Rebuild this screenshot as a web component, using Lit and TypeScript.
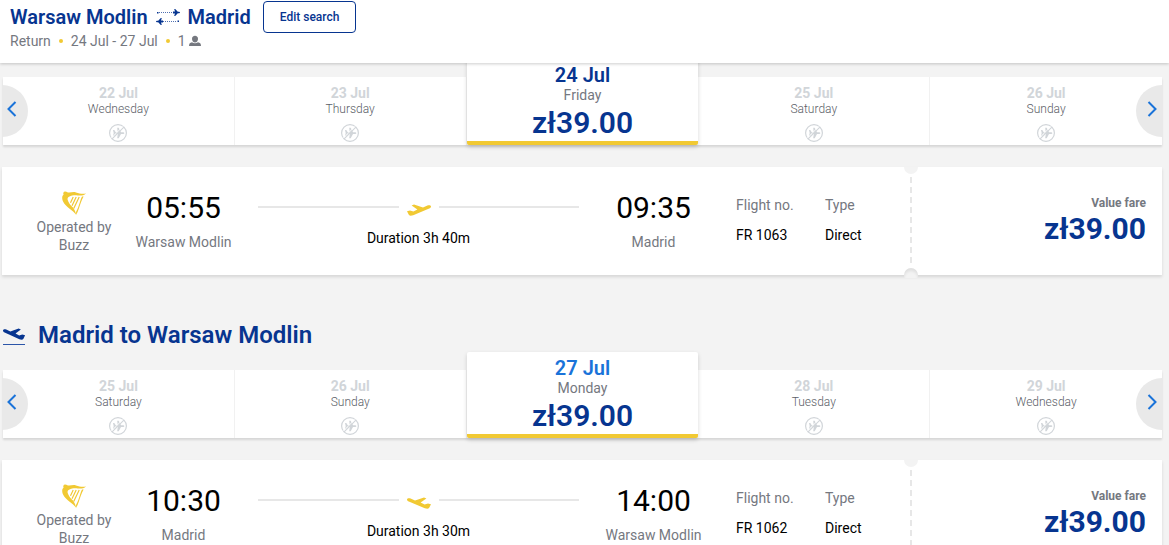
import { LitElement, html, css, svg } from "lit";
import { customElement, property } from "lit/decorators.js";
import { classMap } from "lit/directives/class-map.js";

interface Day {
  date: string;
  weekday: string;
  price?: string;
}

interface Flight {
  departs: string;
  from: string;
  arrives: string;
  to: string;
  duration: string;
  number: string;
  inbound: boolean;
}

const PLANE = "M0 7.2 3 6.4 6.4 7.4 10.4 5.4 4.6 1.4 7 .4 16 3.4 20.4 1.6C22.6 .9 24.2 1.6 24 2.8c-.1.9-.8 1.4-1.8 1.8L6.2 11.2C4 12 2.6 11.8 1.8 10.8Z";

const planeShape = (inbound: boolean) =>
  svg`<path fill="currentColor" transform=${inbound ? "translate(24 0) scale(-1 1)" : "translate(0 0)"} d=${PLANE} />`;

@customElement("date-carousel")
class DateCarousel extends LitElement {
  @property({ attribute: false }) days: Day[] = [];
  @property({ type: Boolean }) active = false;

  static styles = css`
    :host { display: block; position: relative; }
    button { font: inherit; color: inherit; border: 0; margin: 0; padding: 0; background: none; cursor: pointer; }
    .days {
      display: grid;
      grid-template-columns: repeat(5, 1fr);
      grid-template-rows: 68px;
      align-items: end;
      margin-left: 1px;
      background: #fff;
      box-shadow: 0 2px 2px rgba(0, 0, 0, 0.12);
    }
    .day {
      box-sizing: border-box;
      display: flex;
      flex-direction: column;
      align-items: center;
      height: 68px;
      padding-top: 8px;
      border-right: 1px solid #f1f1f1;
    }
    .day:last-child { border-right: 0; }
    .date { font-size: 14px; line-height: 16px; font-weight: 700; color: #d1d5d9; }
    .weekday { font-size: 12px; line-height: 16px; font-weight: 300; color: #5b6067; }
    .none { width: 20px; height: 20px; margin-top: 6px; color: #d1d5d9; }
    .selected {
      height: 86px;
      padding-top: 4px;
      background: #fff;
      border-right: 0;
      border-bottom: 4px solid #f1c933;
      border-radius: 2px;
      box-shadow: 0 2px 4px rgba(0, 0, 0, 0.16);
    }
    .selected .date { font-size: 20px; line-height: 24px; font-weight: 600; color: #073590; }
    .selected.active .date { color: #1a73d9; }
    .selected .weekday { font-size: 14px; line-height: 16px; font-weight: 400; color: #75787f; }
    .price { font-size: 30px; line-height: 40px; font-weight: 600; color: #073590; }
    .nav {
      position: absolute;
      top: 8px;
      width: 26px;
      height: 52px;
      display: flex;
      align-items: center;
      background: #e9e9e9;
      color: #1a73d9;
    }
    .nav svg { width: 10px; height: 16px; margin: 0 5px 4px; }
    .prev { left: 0; border-radius: 0 26px 26px 0; }
    .next { right: 0; border-radius: 26px 0 0 26px; justify-content: flex-end; }
  `;

  render() {
    return html`
      <div class="days">
        ${this.days.map((d) => html`
          <button class=${classMap({ day: true, selected: !!d.price, active: this.active })}>
            <span class="date">${d.date}</span>
            <span class="weekday">${d.weekday}</span>
            ${d.price
              ? html`<span class="price">${d.price}</span>`
              : html`<svg class="none" viewBox="0 0 20 20" aria-hidden="true">
                  <circle cx="10" cy="10" r="8.4" fill="none" stroke="currentColor" stroke-width="1.2" />
                  <path fill="currentColor" d="M5 7h1.3l1.4 2.2h2L9.2 4.8h1.5l2.3 4.4h2.1c1.7 0 1.7 1.8 0 1.8H13l-2.3 4.3H9.2l.6-4.3h-2l-1.5 2.1H5l.7-3Z" />
                  <path d="M3.3 15.1 15.1 3.3" stroke="#fff" stroke-width="1" />
                  <path d="M4.1 15.9 15.9 4.1" stroke="currentColor" stroke-width="1.1" />
                </svg>`}
          </button>`)}
      </div>
      <button class="nav prev" aria-label="Previous dates">
        <svg viewBox="0 0 10 16"><path d="M8.5 1 1.5 8l7 7" fill="none" stroke="currentColor" stroke-width="2" /></svg>
      </button>
      <button class="nav next" aria-label="Next dates">
        <svg viewBox="0 0 10 16"><path d="M1.5 1l7 7-7 7" fill="none" stroke="currentColor" stroke-width="2" /></svg>
      </button>
    `;
  }
}

@customElement("flight-card")
class FlightCard extends LitElement {
  @property({ attribute: false }) flight!: Flight;

  static styles = css`
    :host { display: block; }
    .card {
      display: flex;
      height: 108px;
      background: #fff;
      box-shadow: 0 2px 3px rgba(0, 0, 0, 0.12);
      font-size: 14px;
      line-height: 18px;
      color: #75787f;
    }
    .trip { flex: 1; display: flex; padding: 24px 0 0 32px; }
    .carrier { width: 80px; text-align: center; }
    .harp { display: block; width: 24px; height: 24px; margin: 0 auto 3px; color: #f1c933; }
    .stop { width: 115px; margin-left: 12px; text-align: center; }
    .time { font-size: 30px; line-height: 34px; color: #000; margin-bottom: 8px; }
    .arrive { margin: 0 25px 0 17px; }
    .route { flex: 1; margin-left: 17px; text-align: center; color: #000; }
    .track { display: flex; align-items: center; gap: 8px; height: 32px; margin-bottom: 6px; }
    .rule { flex: 1; height: 2px; background: #e7e7e7; }
    .plane { width: 24px; height: 12px; margin-top: 5px; color: #f1c933; }
    .facts { display: flex; margin: 5px 0 0; }
    .fact { width: 89px; }
    .fact:last-child { width: 86px; }
    dt { margin: 0 0 12px; }
    dd { margin: 0; color: #000; }
    .fare {
      position: relative;
      width: 235px;
      padding: 27px 16px 0 0;
      text-align: right;
    }
    .fare::before {
      content: "";
      position: absolute;
      left: -1px;
      top: 10px;
      bottom: 10px;
      width: 2px;
      background: repeating-linear-gradient(#e7e7e7 0 6px, transparent 6px 10px);
    }
    .notch {
      position: absolute;
      left: -7px;
      width: 14px;
      height: 7px;
      background: #f3f3f3;
    }
    .top { top: 0; border-radius: 0 0 7px 7px; }
    .bottom { bottom: -3px; height: 10px; border-radius: 7px 7px 0 0; box-shadow: inset 0 3px 3px rgba(0, 0, 0, 0.08); }
    .label { font-size: 12px; line-height: 18px; font-weight: 700; }
    .price { font-size: 30px; line-height: 34px; font-weight: 700; color: #073590; }
  `;

  render() {
    const f = this.flight;
    return html`
      <article class="card">
        <div class="trip">
          <div class="carrier">
            <svg class="harp" viewBox="0 0 24 24" aria-hidden="true">
              <path fill="currentColor" d="M1.6 3.8C.9 2.500 1.200.4 3.200.4c1.700 0 2.100 1.100 3.400 1.200C9 1.800 11 .5 14 1.400c3.500 1 6 1.700 10 1-1.800 1.800-5 2.500-8.300 2.100-3.300-.4-5.700-.1-8.700 1.200C5.800 6.300 5.300 7.600 5.700 9c.8 2.900 2.900 5.100 5 7.300 1.700 1.900 2.900 4.600 3.600 7.700-1.700-2.900-4.400-4.500-7-6.600C3.400 14.300.1 10.700.2 6.700c0-1.200.4-2.100 1.400-2.900Z" />
              <path fill="currentColor" d="M21.600 5.500c-1.200 2-1.900 4-2.700 6-1.500 4.100-2.500 8.300-4.600 12.300l-.3-2.800c1.900-3.300 2.700-6.300 3.800-9.500.8-2.400 1.200-4.300 2.300-6Z" />
              <path fill="none" stroke="currentColor" stroke-width="1.200" d="M11.200 6 8.500 11.800M14.200 6 10 14.800M17.200 6 11.700 17.400" />
            </svg>
            Operated by Buzz
          </div>
          <div class="stop">
            <div class="time">${f.departs}</div>
            <div>${f.from}</div>
          </div>
          <div class="route">
            <div class="track">
              <span class="rule"></span>
              <svg class="plane" viewBox="0 0 24 12" aria-hidden="true">${planeShape(f.inbound)}</svg>
              <span class="rule"></span>
            </div>
            <div>Duration ${f.duration}</div>
          </div>
          <div class="stop arrive">
            <div class="time">${f.arrives}</div>
            <div>${f.to}</div>
          </div>
          <dl class="facts">
            <div class="fact"><dt>Flight no.</dt><dd>${f.number}</dd></div>
            <div class="fact"><dt>Type</dt><dd>Direct</dd></div>
          </dl>
        </div>
        <div class="fare">
          <span class="notch top"></span>
          <span class="notch bottom"></span>
          <div class="label">Value fare</div>
          <div class="price">zł39.00</div>
        </div>
      </article>
    `;
  }
}

@customElement("app-root")
class AppRoot extends LitElement {
  static styles = css`
    :host {
      display: flex;
      flex-direction: column;
      height: 100vh;
      background: #f3f3f3;
      font-family: Roboto, "Liberation Sans", sans-serif;
      color: #75787f;
    }
    header {
      position: relative;
      z-index: 1;
      box-sizing: border-box;
      height: 63px;
      flex: none;
      padding: 1px 10px 0;
      background: #fff;
      box-shadow: 0 1px 3px rgba(0, 0, 0, 0.2);
    }
    .route { display: flex; align-items: center; height: 32px; }
    h1 { display: flex; align-items: center; gap: 8px; margin: 0 12px 0 0; font-size: 20px; line-height: 24px; font-weight: 600; color: #073590; }
    .swap { width: 24px; height: 16px; }
    .edit {
      box-sizing: border-box;
      height: 32px;
      padding: 0 16px;
      border: 1px solid #073590;
      border-radius: 4px;
      background: #fff;
      color: #073590;
      font: 500 12px/16px Roboto, "Liberation Sans", sans-serif;
      cursor: pointer;
    }
    .summary { display: flex; align-items: center; font-size: 14px; line-height: 16px; }
    .dot { width: 4px; height: 4px; margin: 0 8px; border-radius: 50%; background: #f1c933; }
    .person { width: 12px; height: 12px; margin-left: 3px; }
    main { flex: 1; min-height: 0; overflow-y: auto; scrollbar-width: none; padding: 14px 7px 0 2px; }
    flight-card { margin-top: 22px; }
    h2 { display: flex; align-items: center; gap: 12px; margin: 45px 0 19px; font-size: 24px; line-height: 31px; font-weight: 600; color: #073590; }
    .landing { width: 24px; height: 18px; margin-top: 3px; }
  `;

  private outDays: Day[] = [
    { date: "22 Jul", weekday: "Wednesday" },
    { date: "23 Jul", weekday: "Thursday" },
    { date: "24 Jul", weekday: "Friday", price: "zł39.00" },
    { date: "25 Jul", weekday: "Saturday" },
    { date: "26 Jul", weekday: "Sunday" },
  ];

  private backDays: Day[] = [
    { date: "25 Jul", weekday: "Saturday" },
    { date: "26 Jul", weekday: "Sunday" },
    { date: "27 Jul", weekday: "Monday", price: "zł39.00" },
    { date: "28 Jul", weekday: "Tuesday" },
    { date: "29 Jul", weekday: "Wednesday" },
  ];

  private out: Flight = {
    departs: "05:55", from: "Warsaw Modlin", arrives: "09:35", to: "Madrid",
    duration: "3h 40m", number: "FR 1063", inbound: false,
  };

  private back: Flight = {
    departs: "10:30", from: "Madrid", arrives: "14:00", to: "Warsaw Modlin",
    duration: "3h 30m", number: "FR 1062", inbound: true,
  };

  render() {
    return html`
      <header>
        <div class="route">
          <h1>
            <span>Warsaw Modlin</span>
            <svg class="swap" viewBox="0 0 24 16" fill="currentColor" aria-label="to and from">
              <path d="M1 3h1.5v1.5H1zM21.5 11.5h1.5v1.5h-1.5z" />
              <path fill="none" stroke="currentColor" stroke-width="1" stroke-opacity=".7" stroke-dasharray="1 1" d="M3 3.5h14M7 12.5h14" />
              <path d="M17 2.600h2L18.200 0h1l2.600 2.800h1.200q1 0 1 .7t-1 .7h-1.200L19.200 7h-1l.8-2.600h-2Z" />
              <path d="M7 11.600H5L5.800 9h-1l-2.600 2.800H1q-1 0-1 .7t1 .7h1.200L4.800 16h1L5 13.400h2Z" />
            </svg>
            <span>Madrid</span>
          </h1>
          <button class="edit">Edit search</button>
        </div>
        <div class="summary">
          <span>Return</span><span class="dot"></span>
          <span>24 Jul - 27 Jul</span><span class="dot"></span>
          <span>1</span>
          <svg class="person" viewBox="0 0 12 12" fill="currentColor" aria-label="adult">
            <path d="M6 .8c1.900 0 3 1.300 3 3.100S7.700 7.400 6 7.400 3 5.700 3 3.900 4.100.8 6 .8Z" />
            <path d="M3 7.300c1.900 1.300 4.100 1.300 6 0 2 .4 3 1.200 3 3.700H0c0-2.500 1-3.300 3-3.700Z" />
          </svg>
        </div>
      </header>
      <main>
        <date-carousel .days=${this.outDays}></date-carousel>
        <flight-card .flight=${this.out}></flight-card>
        <h2>
          <svg class="landing" viewBox="0 0 24 18" aria-hidden="true">
            <g transform="translate(1 0) scale(.92 1)">${planeShape(true)}</g>
            <path d="M1 16.5h22" stroke="#2b55a8" stroke-width="1" />
          </svg>
          <span>Madrid to Warsaw Modlin</span>
        </h2>
        <date-carousel .days=${this.backDays} active></date-carousel>
        <flight-card .flight=${this.back}></flight-card>
      </main>
    `;
  }
}
